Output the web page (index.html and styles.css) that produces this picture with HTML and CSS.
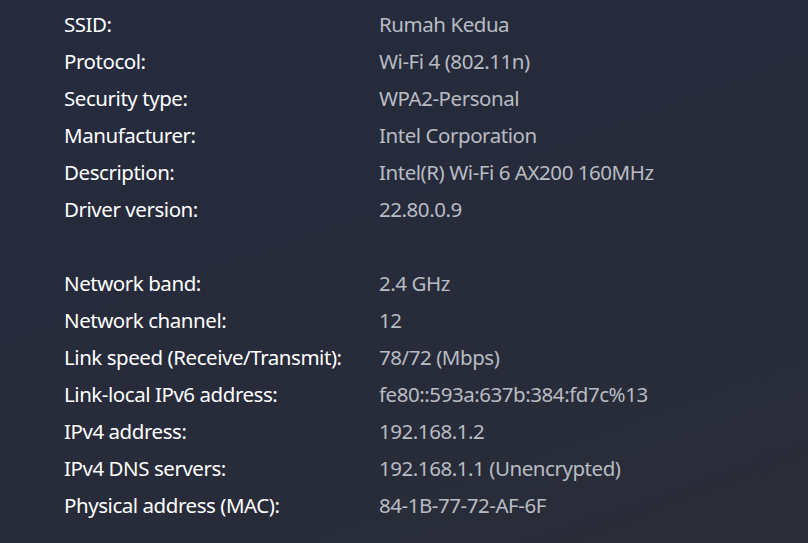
FILE: index.html
```html
<!DOCTYPE html>
<html>
<head>
    <title>Wi-Fi properties</title>
    <link rel="stylesheet" href="styles.css">
</head>
<body>
    <div class="props">
        <div class="row"><span class="label">SSID:</span><span class="value">Rumah Kedua</span></div>
        <div class="row"><span class="label">Protocol:</span><span class="value">Wi-Fi 4 (802.11n)</span></div>
        <div class="row"><span class="label">Security type:</span><span class="value">WPA2-Personal</span></div>
        <div class="row"><span class="label">Manufacturer:</span><span class="value">Intel Corporation</span></div>
        <div class="row"><span class="label">Description:</span><span class="value">Intel(R) Wi-Fi 6 AX200 160MHz</span></div>
        <div class="row"><span class="label">Driver version:</span><span class="value">22.80.0.9</span></div>

        <div class="spacer"></div>

        <div class="row"><span class="label">Network band:</span><span class="value">2.4 GHz</span></div>
        <div class="row"><span class="label">Network channel:</span><span class="value">12</span></div>
        <div class="row"><span class="label">Link speed (Receive/Transmit):</span><span class="value">78/72 (Mbps)</span></div>
        <div class="row"><span class="label">Link-local IPv6 address:</span><span class="value">fe80::593a:637b:384:fd7c%13</span></div>
        <div class="row"><span class="label">IPv4 address:</span><span class="value">192.168.1.2</span></div>
        <div class="row"><span class="label">IPv4 DNS servers:</span><span class="value">192.168.1.1 (Unencrypted)</span></div>
        <div class="row"><span class="label">Physical address (MAC):</span><span class="value">84-1B-77-72-AF-6F</span></div>
    </div>
</body>
</html>
```

FILE: styles.css
```css
html, body {
    height: 100%;
}

body {
    margin: 0;
    font-family: 'Noto Sans', sans-serif;
    font-size: 20.5px;
    letter-spacing: -0.45px;
    background: linear-gradient(160deg, #252b3e 0%, #272b3a 55%, #2a2d38 100%);
    color: #ffffff;
    overflow: hidden;
}

.props {
    display: flex;
    flex-direction: column;
    padding: 5px 0 0 64px;
}

.row {
    display: grid;
    grid-template-columns: 315px auto;
    height: 37px;
    align-items: center;
}

.spacer {
    height: 37px;
}

.label {
    color: #ffffff;
}

.value {
    color: #b9bcc3;
}
```
